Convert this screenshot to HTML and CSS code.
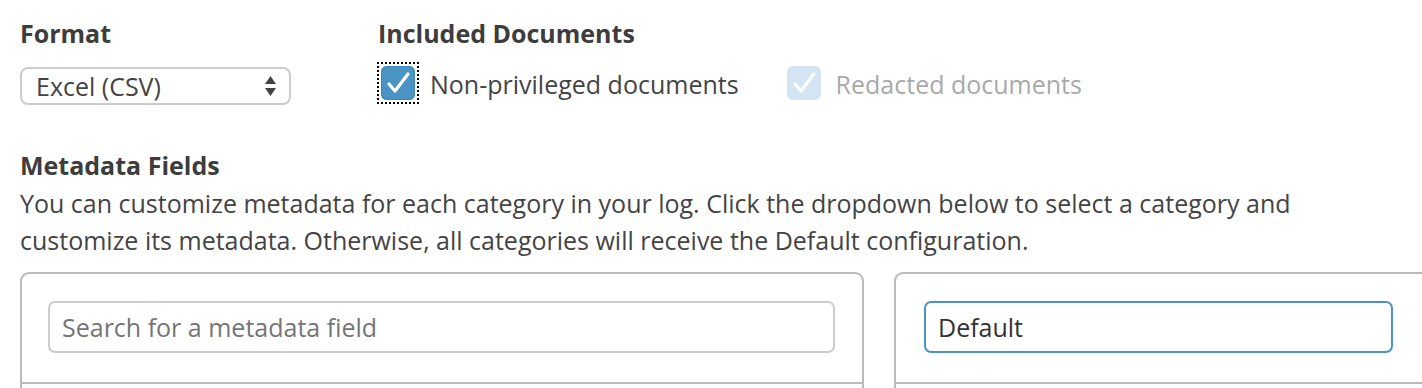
FILE: index.html
```html
<!DOCTYPE html>
<html>
<head>
<meta charset="utf-8">
<link rel="stylesheet" href="styles.css">
</head>
<body>
<div class="page">
  <div class="top">
    <div class="col format">
      <div class="heading">Format</div>
      <div class="select">
        <span>Excel (CSV)</span>
        <svg class="arrows" width="13" height="22" viewBox="0 0 13 22"><path d="M6.5 1 L12 9 H1 Z" fill="#444"/><path d="M6.5 21 L12 13 H1 Z" fill="#444"/></svg>
      </div>
    </div>
    <div class="col included">
      <div class="heading">Included Documents</div>
      <div class="checks">
        <label class="check">
          <span class="focus"><span class="box on"><svg width="34" height="34" viewBox="0 0 34 34"><path d="M8 18 L14 25 L27 8" fill="none" stroke="#fff" stroke-width="3.2" stroke-linecap="round" stroke-linejoin="round"/></svg></span></span>
          <span class="lbl">Non-privileged documents</span>
        </label>
        <label class="check disabled">
          <span class="focus nofocus"><span class="box off"><svg width="34" height="34" viewBox="0 0 34 34"><path d="M8 18 L14 25 L27 8" fill="none" stroke="#fff" stroke-width="3.2" stroke-linecap="round" stroke-linejoin="round"/></svg></span></span>
          <span class="lbl">Redacted documents</span>
        </label>
      </div>
    </div>
  </div>
  <div class="meta">
    <div class="heading">Metadata Fields</div>
    <p class="desc">You can customize metadata for each category in your log. Click the dropdown below to select a category and customize its metadata. Otherwise, all categories will receive the Default configuration.</p>
  </div>
  <div class="panels">
    <div class="panel left">
      <div class="panel-head"><div class="input placeholder">Search for a metadata field</div></div>
      <div class="panel-body"></div>
    </div>
    <div class="panel right">
      <div class="panel-head"><div class="input active">Default</div></div>
      <div class="panel-body"></div>
    </div>
  </div>
</div>
</body>
</html>
```
FILE: styles.css
```css
html, body {
  margin: 0;
  padding: 0;
  background: #fff;
  overflow: hidden;
}
body {
  font-family: "Open Sans", "Noto Sans", sans-serif;
  color: #444;
  font-size: 25px;
}
.page {
  padding: 16px 0 0 20px;
  width: 1402px;
}
.top {
  display: flex;
}
.format {
  width: 358px;
  flex: none;
}
.heading {
  font-weight: 700;
  font-size: 25px;
  line-height: 34px;
  color: #3d3d3d;
}
.select {
  margin-top: 17px;
  height: 34px;
  border: 2px solid #ccc;
  border-radius: 8px;
  display: flex;
  align-items: center;
  justify-content: space-between;
  padding: 0 12px 0 14px;
  box-sizing: content-box;
  width: 241px;
  line-height: 34px;
}
.arrows { display: block; }
.checks {
  display: flex;
  gap: 45px;
  margin-top: 12px;
}
.check {
  display: flex;
  align-items: center;
}
.focus {
  display: block;
  padding: 3px;
  outline: 2px dotted #000;
  outline-offset: -1px;
}
.nofocus { outline: none; }
.box {
  display: block;
  width: 34px;
  height: 34px;
  border-radius: 6px;
}
.box svg { display: block; }
.box.on { background: #4a94c4; box-shadow: inset 0 0 0 1px #3f86b6; }
.box.off { background: #d3e5f2; }
.lbl {
  margin-left: 12px;
  line-height: 38px;
  padding-top: 3px;
}
.disabled .lbl { color: #a9a9a9; }
.meta {
  margin-top: 43px;
}
.desc {
  margin: 3px 0 0 0;
  line-height: 37px;
  width: 1300px;
}
.panels {
  display: flex;
  gap: 30px;
  margin-top: 13px;
}
.panel {
  border: 2px solid #bbb;
  border-radius: 9px;
  box-sizing: border-box;
  height: 160px;
  flex: none;
}
.panel.left { width: 844px; }
.panel.right { width: 540px; }
.panel-head {
  padding: 27px 27px 29px 26px;
  border-bottom: 2px solid #bbb;
}
.panel.right .panel-head { padding-left: 28px; }
.input {
  height: 48px;
  border: 2px solid #ccc;
  border-radius: 7px;
  display: flex;
  align-items: center;
  padding: 0 12px;
  font-size: 25px;
}
.placeholder { color: #757575; }
.input.active { border-color: #4a94c4; color: #333; width: 441px; }
```
